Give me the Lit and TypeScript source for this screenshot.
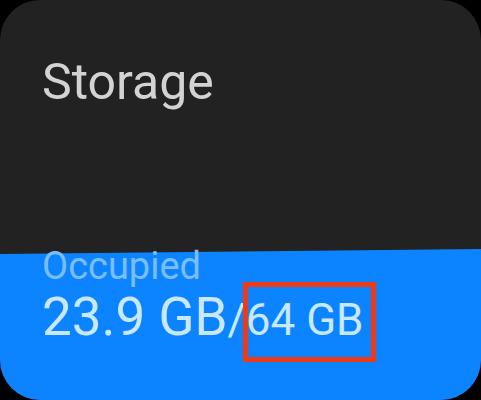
import { LitElement, html, css } from "lit";
import { customElement, property } from "lit/decorators.js";

@customElement("storage-card")
class StorageCard extends LitElement {
  @property() used = "";
  @property() total = "";

  static styles = css`
    :host {
      display: flex;
      flex-direction: column;
      justify-content: space-between;
      flex: 1;
      overflow: hidden;
      border-radius: 40px;
      background: #222222;
      font-family: Roboto, sans-serif;
      font-weight: 400;
      white-space: nowrap;
    }
    .title {
      margin: 0;
      padding: 52px 42px 0;
      font-size: 50px;
      line-height: 60px;
      font-weight: 400;
      color: #d3d3d3;
    }
    .usage {
      position: relative;
      padding: 0 42px 54px;
    }
    .level {
      position: absolute;
      inset: 5px 0 0;
      background: #0d84ff;
      clip-path: polygon(0 5px, 100% 0, 100% 100%, 0 100%);
    }
    .label,
    .amount {
      position: relative;
      margin: 0;
    }
    .label {
      font-size: 38px;
      line-height: 44px;
      color: #7abeff;
    }
    .amount {
      font-size: 53px;
      line-height: 58px;
      color: #c8e8ff;
    }
    .limit {
      font-size: 44px;
      line-height: 44px;
    }
    .total {
      position: relative;
    }
    .mark {
      position: absolute;
      inset: -12px -12px -16px -3px;
      border: 5px solid #f03a17;
    }
  `;

  render() {
    return html`
      <h1 class="title">Storage</h1>
      <section class="usage">
        <div class="level"></div>
        <p class="label">Occupied</p>
        <p class="amount">${this.used}<span class="limit">/<span class="total">${this.total}<span class="mark"></span></span></span></p>
      </section>
    `;
  }
}

@customElement("app-root")
class AppRoot extends LitElement {
  static styles = css`
    :host {
      display: flex;
      min-height: 100vh;
      background: #000000;
    }
  `;

  render() {
    return html`<storage-card used="23.9 GB" total="64 GB"></storage-card>`;
  }
}
